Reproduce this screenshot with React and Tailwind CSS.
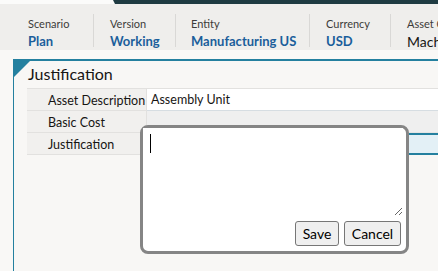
import React from 'react';

const POV = [
  { label: 'Scenario', value: 'Plan', w: 'w-[93px] pl-[28px]' },
  { label: 'Version', value: 'Working', w: 'w-[82px] pl-[16px] border-l' },
  { label: 'Entity', value: 'Manufacturing US', w: 'w-[134px] pl-[15px] border-l' },
  { label: 'Currency', value: 'USD', w: 'w-[81px] pl-[16px] border-l' },
];

const ROWS = [
  { label: 'Asset Description', value: 'Assembly Unit', cell: 'bg-white border-b border-[#d6dde2]' },
  { label: 'Basic Cost', value: '', cell: 'bg-[#efefef] border-b border-[#e6e5e3]' },
  { label: 'Justification', value: '', cell: 'bg-[#e3f0f6] border-y-2 border-[#24809f]' },
];

const App = () => {
  return (
    <div className="relative w-[438px] h-[271px] overflow-hidden bg-[#f9f8f6] font-['Lato',sans-serif] text-[#161513]">
      {/* top strip */}
      <div className="h-[4px] bg-[#fbfbfa] flex">
        <div className="ml-[113px] flex-1 bg-[#1f3b42] [clip-path:polygon(0_0,100%_0,100%_100%,2px_100%)]"></div>
      </div>

      {/* POV bar */}
      <div className="h-[46px] bg-[#efeeec] flex items-start pt-[10px]">
        {POV.map((p) => (
          <div key={p.label} className={`${p.w} h-[33px] border-[#d9d8d6] shrink-0`}>
            <div className="text-[11px] leading-[17px] pt-[1px] text-[#3d3c3a]">{p.label}</div>
            <div className="text-[13px] leading-[17px] mt-[1px] font-bold text-[#1b5e9b] whitespace-nowrap">{p.value}</div>
          </div>
        ))}
        <div className="h-[33px] pl-[16px] border-l border-[#d9d8d6] whitespace-nowrap">
          <div className="text-[11px] leading-[17px] pt-[1px] text-[#3d3c3a]">Asset Class</div>
          <div className="text-[14px] leading-[17px] mt-[1px] text-[#161513]">Machinery</div>
        </div>
      </div>

      {/* form panel */}
      <div className="relative mt-[9px] ml-[13px] h-[220px] border-t-2 border-l border-[#24809f] bg-[#f8f7f5]">
        <div className="absolute left-0 top-0 w-0 h-0 border-t-[16px] border-r-[16px] border-t-[#24809f] border-r-transparent"></div>
        <div className="pl-[14px] pt-[2px] text-[16px] leading-[22px] text-[#161513]">Justification</div>
        <div className="ml-[13px] mt-[3px] border-t border-[#e2e1df]">
          {ROWS.map((r) => (
            <div key={r.label} className="flex h-[22px]">
              <div className="w-[120px] shrink-0 bg-[#f1f0ee] border-b border-r border-[#e2e1df] pl-[21px] pt-[2px] text-[12.5px] leading-[19px] whitespace-nowrap">
                {r.label}
              </div>
              <div className={`flex-1 pl-[4px] text-[12.5px] leading-[21px] ${r.cell}`}>{r.value}</div>
            </div>
          ))}
        </div>
      </div>

      {/* justification popup */}
      <div className="absolute left-[140px] top-[125px] w-[269px] h-[129px] bg-white border-[3px] border-[#858585] rounded-[8px] flex flex-col">
        <div className="relative">
          <textarea className="block w-[260px] h-[88px] border-0 outline-none bg-white resize px-[7px] py-[5px] text-[13px]"></textarea>
          <div className="absolute left-[7px] top-[6px] w-px h-[19px] bg-black"></div>
        </div>
        <div className="flex justify-end gap-[5px] pr-[5px] mt-[5px]">
          <button className="h-[25px] w-[44px] bg-[#efefef] border border-[#767676] rounded-[3px] text-[14px] leading-[22px] text-black">Save</button>
          <button className="h-[25px] w-[57px] bg-[#efefef] border border-[#767676] rounded-[3px] text-[14px] leading-[22px] text-black">Cancel</button>
        </div>
      </div>
    </div>
  );
};

export default App;
